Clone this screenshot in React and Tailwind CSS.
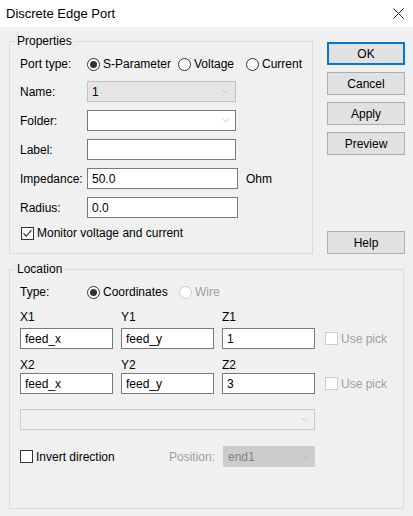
import { ChevronDown } from 'lucide-react';

const Radio = ({ checked, disabled, label, className = '' }) => (
  <div className={`flex items-center ${className}`}>
    <span
      className={`flex h-[13px] w-[13px] shrink-0 items-center justify-center rounded-full border bg-white ${
        disabled ? 'border-[#cccccc]' : 'border-[#333333]'
      }`}
    >
      {checked && <span className="h-[7px] w-[7px] rounded-full bg-[#333333]" />}
    </span>
    <span className={`ml-[3px] ${disabled ? 'text-[#a0a0a0]' : ''}`}>{label}</span>
  </div>
);

const Check = ({ checked, disabled, label, className = '' }) => (
  <div className={`flex items-center ${className}`}>
    <span
      className={`flex h-[13px] w-[13px] shrink-0 items-center justify-center border bg-white ${
        disabled ? 'border-[#cccccc]' : 'border-[#333333]'
      }`}
    >
      {checked && (
        <svg width="11" height="11" viewBox="0 0 11 11">
          <path d="M1.5 5.5 L4.2 8.2 L9.5 2.2" fill="none" stroke="#333" strokeWidth="1.1" />
        </svg>
      )}
    </span>
    <span className={`ml-[3px] ${disabled ? 'text-[#a0a0a0]' : ''}`}>{label}</span>
  </div>
);

const Input = ({ value = '', className = '' }) => (
  <div className={`flex h-[21px] items-center border border-[#7a7a7a] bg-white pl-[4px] ${className}`}>
    {value}
  </div>
);

const Select = ({ value = '', className = '', tone = 'white' }) => {
  const tones = {
    white: 'bg-white border-[#7a7a7a] text-black',
    grey: 'bg-[#e5e5e5] border-[#c2c2c2] text-black',
    off: 'bg-[#f0f0f0] border-[#cccccc]',
    dim: 'bg-[#cccccc] border-[#cccccc] text-[#838383]',
  };
  return (
    <div className={`flex h-[21px] items-center justify-between border pl-[4px] pr-[4px] ${tones[tone]} ${className}`}>
      <span>{value}</span>
      <ChevronDown size={11} strokeWidth={1.2} className="text-[#a0a0a0]" />
    </div>
  );
};

const Button = ({ children, primary }) => (
  <button
    className={`h-[23px] w-[78px] border bg-[#e1e1e1] text-[12px] ${
      primary ? 'border-[#0078d7] shadow-[inset_0_0_0_1px_#0078d7]' : 'border-[#adadad]'
    }`}
  >
    {children}
  </button>
);

const Group = ({ title, className = '', children }) => (
  <div className={`relative border border-[#dcdcdc] ${className}`}>
    <span className="absolute left-[5px] top-[-8px] bg-[#f0f0f0] px-[2px] leading-[14px]">{title}</span>
    {children}
  </div>
);

export default function App() {
  return (
    <div
      className="relative h-[516px] w-[413px] overflow-hidden bg-[#f0f0f0] text-[12px] leading-[14px] text-black"
      style={{ fontFamily: '"Liberation Sans", Arial, sans-serif' }}
    >
      <div className="flex h-[27px] items-center justify-between bg-white pl-[6px] pr-[9px]">
        <span className="text-[13px]">Discrete Edge Port</span>
        <svg width="11" height="11" viewBox="0 0 11 11">
          <path d="M0.5 0.5 L10.5 10.5 M10.5 0.5 L0.5 10.5" stroke="#222" strokeWidth="1" />
        </svg>
      </div>

      <div className="flex items-start">
        <Group title="Properties" className="ml-[9px] mt-[14px] h-[213px] w-[304px]">
          <div className="flex flex-col pl-[10px] pt-[14px]">
            <div className="flex h-[16px] items-center">
              <span className="w-[67px]">Port type:</span>
              <Radio checked label="S-Parameter" className="w-[91px]" />
              <Radio label="Voltage" className="w-[68px]" />
              <Radio label="Current" />
            </div>
            <div className="mt-[9px] flex flex-col gap-[8px]">
              <div className="flex items-center">
                <span className="w-[67px]">Name:</span>
                <Select value="1" tone="grey" className="w-[149px]" />
              </div>
              <div className="flex items-center">
                <span className="w-[67px]">Folder:</span>
                <Select className="w-[149px]" />
              </div>
              <div className="flex items-center">
                <span className="w-[67px]">Label:</span>
                <Input className="w-[149px]" />
              </div>
              <div className="flex items-center">
                <span className="w-[67px]">Impedance:</span>
                <Input value="50.0" className="w-[151px]" />
                <span className="ml-[8px]">Ohm</span>
              </div>
              <div className="flex items-center">
                <span className="w-[67px]">Radius:</span>
                <Input value="0.0" className="w-[151px]" />
              </div>
            </div>
            <Check checked label="Monitor voltage and current" className="ml-[1px] mt-[8px]" />
          </div>
        </Group>

        <div className="ml-[14px] mt-[15px] flex h-[212px] flex-col gap-[7px]">
          <Button primary>OK</Button>
          <Button>Cancel</Button>
          <Button>Apply</Button>
          <Button>Preview</Button>
          <div className="mt-auto">
            <Button>Help</Button>
          </div>
        </div>
      </div>

      <Group title="Location" className="ml-[9px] mt-[15px] h-[240px] w-[395px]">
        <div className="flex flex-col pl-[10px] pt-[14px]">
          <div className="flex h-[16px] items-center">
            <span className="w-[67px]">Type:</span>
            <Radio checked label="Coordinates" className="w-[92px]" />
            <Radio disabled label="Wire" />
          </div>

          <div className="mt-[10px] flex h-[14px] gap-[8px]">
            <span className="w-[93px]">X1</span>
            <span className="w-[93px]">Y1</span>
            <span className="w-[93px]">Z1</span>
          </div>
          <div className="mt-[4px] flex items-center gap-[8px]">
            <Input value="feed_x" className="w-[93px]" />
            <Input value="feed_y" className="w-[93px]" />
            <Input value="1" className="w-[93px]" />
            <Check disabled label="Use pick" className="ml-[2px]" />
          </div>

          <div className="mt-[9px] flex h-[14px] gap-[8px]">
            <span className="w-[93px]">X2</span>
            <span className="w-[93px]">Y2</span>
            <span className="w-[93px]">Z2</span>
          </div>
          <div className="mt-[1px] flex items-center gap-[8px]">
            <Input value="feed_x" className="w-[93px]" />
            <Input value="feed_y" className="w-[93px]" />
            <Input value="3" className="w-[93px]" />
            <Check disabled label="Use pick" className="ml-[2px]" />
          </div>

          <Select tone="off" className="mt-[15px] w-[295px]" />

          <div className="mt-[16px] flex items-center">
            <Check label="Invert direction" className="w-[149px]" />
            <span className="w-[54px] text-[#a0a0a0]">Position:</span>
            <Select value="end1" tone="dim" className="w-[92px]" />
          </div>
        </div>
      </Group>
    </div>
  );
}
